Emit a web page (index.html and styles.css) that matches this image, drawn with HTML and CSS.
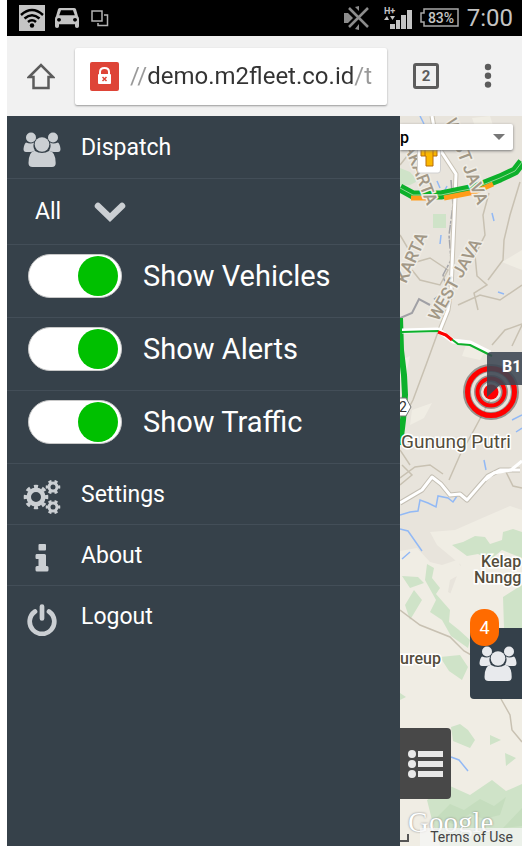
FILE: index.html
```html
<!DOCTYPE html>
<html lang="en">
<head>
<meta charset="utf-8">
<meta name="viewport" content="width=device-width, initial-scale=1">
<title>M2Fleet</title>
<link rel="stylesheet" href="styles.css">
</head>
<body>
<svg class="defs" aria-hidden="true">
  <symbol id="people" viewBox="0 0 38 36">
    <circle cx="8" cy="5.5" r="5"/><circle cx="30" cy="5.5" r="5"/>
    <path d="M3 10.500Q8 12.500 11 10.500Q9.500 15 12 18.500Q9 20 7 20H3Q0.500 20 0.500 17Q1 12 3 10.500Z"/>
    <path d="M35 10.500Q30 12.500 27 10.500Q28.500 15 26 18.500Q29 20 31 20H35Q37.500 20 37.500 17Q37 12 35 10.500Z"/>
    <circle cx="19" cy="12.500" r="7.300"/>
    <path d="M11.500 18.700Q19 23.500 26.500 18.700Q32.700 20 32.700 31Q32.700 35 29 35H9.500Q5.500 35 5.500 31Q5.500 20 11.500 18.700Z"/>
  </symbol>
</svg>

<div class="phone">
  <header class="status">
    <div class="status-group">
      <svg width="26" height="26" viewBox="0 0 26 26"><path fill="#c4c4c4" d="M0 0H26V26H0Z"/><g fill="none" stroke="#000" stroke-width="2.500"><path d="M2 10Q13 0 24 10"/><path d="M5.500 13.500Q13 7 20.500 13.500"/><path d="M9 17Q13 13.500 17 17"/></g><circle cx="13" cy="20.500" r="2.200"/></svg>
      <svg class="car" width="24" height="20" viewBox="0 0 24 22" preserveAspectRatio="none"><path fill="#c4c4c4" fill-rule="evenodd" d="M5 0H19Q20.500 0 21 1.500L23 9Q24 10 24 12V20Q24 22 22 22Q20 22 20 20V18H4V20Q4 22 2 22Q0 22 0 20V12Q0 10 1 9L3 1.500Q3.500 0 5 0ZM6 2.500L4.200 8H19.800L18 2.500ZM4 11A2 2 0 1 0 4 15A2 2 0 1 0 4 11ZM20 11A2 2 0 1 0 20 15A2 2 0 1 0 20 11Z"/></svg>
      <svg width="18" height="17" viewBox="0 0 18 17" fill="none" stroke="#b4b4b4" stroke-width="1.500"><path d="M1 1H11V11H1Z"/><path d="M13 5H16.500V15.500H7V13"/></svg>
    </div>
    <div class="status-group status-right">
      <svg width="26" height="24" viewBox="0 0 26 24"><path fill="#8c8c8c" d="M0 7H4L9 12L4 17H0Z"/><path d="M5 2L24 21M24 2L5 21" stroke="#8c8c8c" stroke-width="2.500"/><path d="M11 1L15 0V5ZM11 23L15 24V18Z" fill="#8c8c8c"/></svg>
      <svg class="signal" width="28" height="23" viewBox="0 0 28 23" fill="#c4c4c4"><text class="net" x="0" y="7">H+</text><path d="M0 13L3 9L5 13ZM6 9H11L8.500 13ZM6 17H11V22H6ZM12 13H16V22H12ZM17 8H22V22H17ZM23 3H28V22H23Z"/></svg>
      <svg width="39" height="20" viewBox="0 0 39 20"><path d="M4 1H38V18H4V14H1V5H4Z" fill="none" stroke="#a8a8a8" stroke-width="1.500"/><text class="charge" x="21" y="15">83%</text></svg>
      <span class="clock">7:00</span>
    </div>
  </header>

  <div class="toolbar">
    <button class="tool" aria-label="Home"><svg width="28" height="28" viewBox="0 0 28 28" fill="none" stroke="#5c5c5c" stroke-width="2.500"><path d="M2 15L14 3L26 15H21.500V26H6.500V15Z"/></svg></button>
    <label class="address">
      <svg width="29" height="29" viewBox="0 0 29 29"><rect width="29" height="29" rx="2" fill="#de4437"/><path d="M10 13V10Q10 6 14.500 6Q19 6 19 10V13" fill="none" stroke="#fff" stroke-width="2"/><rect x="8" y="12" width="13" height="10" rx="1" fill="#fff"/><path d="M12.500 15L16.500 19M16.500 15L12.500 19" stroke="#de4437" stroke-width="1.500"/></svg>
      <input class="url" type="text" value="//demo.m2fleet.co.id/t" aria-label="Address">
    </label>
    <button class="tool tabs" aria-label="Open tabs">2</button>
    <button class="tool" aria-label="Menu"><svg width="8" height="26" viewBox="0 0 8 26" fill="#5c5c5c"><circle cx="4" cy="4" r="3.200"/><circle cx="4" cy="12.800" r="3.200"/><circle cx="4" cy="21.600" r="3.200"/></svg></button>
  </div>

  <main class="content">
    <nav class="menu">
      <a class="row link" href="#dispatch"><span class="icon"><svg width="38" height="36" fill="#cbcfd3"><use href="#people"/></svg></span>Dispatch</a>
      <div class="row filter">
        <select class="group" aria-label="Group"><option>All</option></select>
        <svg class="chevron" width="32" height="20" viewBox="0 0 32 20"><path d="M4 4L16 15.500L28 4" fill="none" stroke="#cbcfd3" stroke-width="6.500" stroke-linecap="round"/></svg>
      </div>
      <label class="row switch"><input type="checkbox" checked>Show Vehicles</label>
      <label class="row switch"><input type="checkbox" checked>Show Alerts</label>
      <label class="row switch"><input type="checkbox" checked>Show Traffic</label>
      <a class="row link" href="#settings"><span class="icon"><svg width="38" height="34" viewBox="0 0 38 34" fill="none" stroke="#cbcfd3">
        <circle cx="13" cy="17" r="7.300" stroke-width="4.600"/><circle cx="13" cy="17" r="10.600" stroke-width="3.400" pathLength="16" stroke-dasharray="1 1" stroke-dashoffset=".5"/>
        <circle cx="30" cy="7" r="4" stroke-width="3"/><circle cx="30" cy="7" r="6" stroke-width="2.600" pathLength="12" stroke-dasharray="1 1" stroke-dashoffset=".5"/>
        <circle cx="30" cy="27" r="4" stroke-width="3"/><circle cx="30" cy="27" r="6" stroke-width="2.600" pathLength="12" stroke-dasharray="1 1" stroke-dashoffset=".5"/></svg></span>Settings</a>
      <a class="row link" href="#about"><span class="icon"><svg width="14" height="28" viewBox="0 0 14 28" fill="#cbcfd3"><rect x="3.500" width="7.500" height="6.500" rx="1"/><path d="M1.500 10H9.500Q11 10 11 11.500V22H12Q13.500 22 13.500 23.500V26Q13.500 27.500 12 27.500H2Q.5 27.500 .5 26V23.500Q.5 22 2 22H3.500V15H1.500Q.5 15 .5 13.500V11.500Q.5 10 1.500 10Z"/></svg></span>About</a>
      <a class="row link" href="#logout"><span class="icon"><svg width="30" height="32" viewBox="0 0 30 32" fill="none" stroke="#cbcfd3" stroke-width="4.700" stroke-linecap="round"><path d="M15 2.500V14.500M8 7.500A12.300 12.300 0 1 0 22 7.500"/></svg></span>Logout</a>
    </nav>

    <section class="map" aria-label="Map">
      <svg class="tiles" viewBox="400 116 122 730" preserveAspectRatio="xMinYMin slice">
        <path fill="#e8e4dc" d="M400 116H522V846H400Z"/>
        <path fill="#f0ede4" d="M400 551L417 548L430 562L442 565L457 560L464 572L450 580L448 592L462 600L470 612V640L522 640V846H400ZM430 532L455 530L480 519L510 506L522 510V640H465L448 600L461 565L437 545ZM502 262L522 250V270ZM472 118L490 116L496 135L480 140ZM402 360L410 356L406 375L400 380ZM412 410L432 403L424 418L410 425ZM466 345L486 350L480 360L462 356Z"/>
        <path fill="#cfe3c8" d="M433 214H446V228H433ZM400 168L410 172L418 181L410 185H400ZM452 545L463 542L475 536L485 537L490 544L502 540L503 532L513 529L522 532V558L502 550L490 560L478 554L467 556ZM427 564L434 568L432 578L440 588L436 594L443 602L450 610L449 622L459 630L470 640L468 648L451 636L442 620L430 612L436 600L425 580ZM402 576L418 577L424 583L410 588ZM405 605L414 590L422 600L410 620ZM503 597L522 585V628H504ZM440 657L460 655L468 667L462 680L449 671ZM400 693L406 697L400 700ZM451 727L460 724L468 730L475 740L470 748L453 741ZM490 735L501 740L490 745ZM505 753L516 758L506 766ZM427 800L450 786L470 795L492 780L506 791L522 784V846H440L432 820Z"/>
        <path fill="#c5ddbe" d="M436 818L450 804L464 810L480 799L494 806L506 797L500 815L484 819L470 814L453 824ZM503 828L522 808V826Z"/>
        <g class="minor">
          <path d="M489 193L483 215L485 235L475 255L477 276L487 285L474 293L478 310M520 182L510 215L504 240L503 260L488 280M400 165L412 150M400 235L416 262L430 258L448 270L440 285L420 280L412 270M438 332L426 365L413 400L400 424M458 305L480 295L500 300L522 285M492 345L505 330L522 324M522 325L512 346M490 400L474 430L460 455L449 480M400 478L415 467L430 465L443 474M505 470L513 486L522 488M400 610L420 625L450 637L464 651L480 660M501 699L510 715L512 730L522 742M410 465L400 450M400 485L412 475L402 465"/>
        </g>
        <path d="M451 180L453 205L449 235L451 260L443 275L447 290L433 300" fill="none" stroke="#a4a4a8" stroke-width="1.500" stroke-dasharray="9 2 3 1"/>
        <path d="M400 318L412 313L419 299L430 305" fill="none" stroke="#a0a0a5" stroke-width="2"/>
        <g class="water"><path d="M437 181L440 188M447 186L443 194M441 235L440 244M492 213L494 221M400 515L410 512L418 511L420 500L428 503L436 507L438 496L448 498L453 502L457 496M400 529L408 531L422 551M402 559L410 552M451 757L459 760L468 771M486 470L484 460M512 420L522 415M498 292L504 294M420 116L424 124M516 432L522 428"/></g>
        <g fill="none" stroke-linejoin="round">
          <path d="M432 116L437 145L456 174L454 220L451 290L448 310L440 330" stroke="#c9c3b6" stroke-width="5"/>
          <path d="M432 116L437 145L456 174L454 220L451 290L448 310L440 330" stroke="#fff" stroke-width="3"/>
          <path d="M400 503L422 490L432 477L441 484L450 495L460 494L467 500L480 485L488 476L500 470H520" stroke="#c4bfb4" stroke-width="5"/>
          <path d="M400 503L422 490L432 477L441 484L450 495L460 494L467 500L480 485L488 476L500 470H520" stroke="#fff" stroke-width="3"/>
          <path d="M485 480L494 473L511 470L522 461" stroke="#fff" stroke-width="3"/>
          <path d="M400 188L413 195L441 195L475 188L500 178L515 171L522 162" stroke="#0db02b" stroke-width="9"/>
          <path d="M411 198H428M444 198L475 192L493 184" stroke="#ff9c1a" stroke-width="5"/>
          <path d="M400 188L413 195L441 195L475 188L500 178L515 171L522 162" stroke="#8fd893" stroke-width="1"/>
          <path d="M400 318L401 350L404 375L405 395L403 420L400 445" stroke="#0db02b" stroke-width="6"/>
          <path d="M402 331L438 330L453 341L470 343L490 353" stroke="#fff" stroke-width="5"/>
          <path d="M402 332L438 331L450 338L458 344L470 345L492 356" stroke="#0db02b" stroke-width="2"/>
          <path d="M438 332L446 335L452 340" stroke="#f00" stroke-width="3"/>
        </g>
        <path d="M396 398H406L411 407L406 416H396Z" fill="#fff" stroke="#777"/>
        <text class="shield" x="399" y="412">2</text>
        <g class="province">
          <text transform="translate(404 146) rotate(69)">AKARTA</text>
          <text transform="translate(445 121) rotate(69)">WEST JAVA</text>
          <text transform="translate(406 284) rotate(-66)">KARTA</text>
          <text transform="translate(438 322) rotate(-61)">WEST JAVA</text>
        </g>
        <g class="town">
          <text class="big" x="401" y="448">Gunung Putri</text>
          <text x="481" y="567">Kelap</text>
          <text x="474" y="583">Nungg</text>
          <text x="400" y="664">ureup</text>
        </g>
        <g fill="none"><circle cx="491" cy="392" r="24" stroke="#333" stroke-opacity=".45" stroke-width="8"/><circle cx="491" cy="392" r="13.500" stroke="#333" stroke-opacity=".45" stroke-width="7"/><circle cx="491" cy="392" r="23.500" stroke="#f00" stroke-width="5"/><circle cx="491" cy="392" r="13.500" stroke="#f00" stroke-width="4"/></g>
        <circle cx="491" cy="392" r="7.500" fill="#f00"/>
        <path d="M522 352H491Q487 352 487 356V397L500 385H522Z" fill="#3b4652" fill-opacity=".88"/>
        <text class="unit" x="502" y="372">B1</text>
        <path fill="#fff" stroke="#d0d0d0" d="M417.500 140H440.500V170Q440.500 173 438 173H420Q417.500 173 417.500 170Z"/>
        <path d="M421 146H437V156H433V166H426V156H421Z" fill="#fbb800" stroke="#b66d0c"/><path d="M425 148V156M433 148V156" stroke="#b66d0c"/>
      </svg>
      <select class="layer" aria-label="Map layer"><option>p</option></select>
      <svg class="layer-arrow" width="12" height="6" viewBox="0 0 12 6"><path d="M0 0H12L6 6Z" fill="#777"/></svg>
      <button class="fleet" aria-label="Drivers"><svg width="38" height="36" fill="#e8eaed"><use href="#people"/></svg><span class="badge">4</span></button>
      <button class="list" aria-label="List"><svg width="36" height="28" viewBox="0 0 36 28" fill="#e8e8e8"><circle cx="4" cy="4" r="4"/><circle cx="4" cy="14" r="4"/><circle cx="4" cy="24" r="4"/><path d="M10 1H35V7H10ZM10 11H35V17H10ZM10 21H35V27H10Z"/></svg></button>
      <span class="google">Google</span>
      <span class="scale"></span>
      <a class="terms" href="#terms">Terms of Use</a>
    </section>
  </main>
</div>
</body>
</html>
```
FILE: styles.css
```css
* { box-sizing: border-box; }
body { margin: 0; background: #fff; font-family: Roboto, "Liberation Sans", sans-serif; }
button, input, select { font: inherit; margin: 0; padding: 0; border: 0; background: none; }
svg { display: block; flex: none; }
a { color: inherit; text-decoration: none; }
.defs { position: absolute; width: 0; height: 0; }
.phone { display: flex; flex-direction: column; min-height: 100vh; margin: 0 6px 0 7px; }

.status { display: flex; justify-content: space-between; align-items: center; height: 36px; padding: 0 9px 0 12px; background: #000; }
.status-group { display: flex; align-items: center; gap: 10px; }
.status-right { gap: 8px; }
.signal { margin-left: 6px; overflow: visible; }
.car { margin-right: 2px; }
.net { font-size: 9px; font-weight: 700; }
.charge { font-size: 14px; font-weight: 500; fill: #c4c4c4; text-anchor: middle; }
.clock { color: #c4c4c4; font-size: 24px; line-height: 36px; }

.toolbar { display: flex; align-items: center; height: 80px; padding: 0 14px; background: #f1f1f1; }
.tool { display: flex; flex: none; align-items: center; justify-content: center; width: 40px; height: 40px; }
.address { display: flex; flex: 1; align-items: center; gap: 11px; min-width: 0; height: 57px; margin: 0 26px 0 14px; padding: 0 8px 0 15px; border-radius: 2px; background: #fff; box-shadow: 0 1px 2px #999; }
.url { flex: 1; min-width: 0; font-size: 25px; color: transparent; background: linear-gradient(90deg, #999 17px, #333 17px, #333 233px, #999 233px); background-clip: text; -webkit-background-clip: text; }
.tabs { width: 26px; height: 26px; margin-right: 29px; border: 3px solid #5c5c5c; border-radius: 3px; color: #5c5c5c; font-size: 15px; font-weight: 700; }
.toolbar .url { font-size: 24px; background-image: linear-gradient(90deg, #999 17px, #333 17px, #333 224px, #999 224px); }

.content { display: grid; flex: 1; grid-template-columns: minmax(0, 1fr) 122px; }
.menu { background: #36414a; color: #fff; }
.row { display: flex; border-bottom: 1px solid #434e58; }
.link { align-items: center; gap: 20px; height: 61px; padding-left: 16px; font-size: 23px; }
.link:first-child { height: 63px; }
.link:last-child { border-bottom: 0; }
.icon { display: flex; justify-content: center; width: 38px; padding-top: 6px; }
.filter { align-items: center; height: 66px; padding-left: 28px; }
.group { width: 91px; height: 44px; appearance: none; color: #fff; font-size: 23px; }
.chevron { margin-left: -32px; pointer-events: none; }
.switch { align-items: flex-start; gap: 21px; height: 73px; padding: 9px 0 0 21px; font-size: 29px; line-height: 44px; }
.switch input { appearance: none; display: flex; align-items: center; width: 94px; height: 44px; padding: 0 3px; border: 1px solid #c8c8c8; border-radius: 22px; background: #fff; }
.switch input::before { content: ""; width: 40px; height: 40px; border-radius: 50%; background: #aaa; }
.switch input:checked { justify-content: flex-end; }
.switch input:checked::before { background: #00c000; }

.map { position: relative; overflow: hidden; background: #f0ede4; }
.tiles { position: absolute; width: 100%; height: 100%; }
.minor { fill: none; stroke: #c8c1b2; stroke-width: 1.5; }
.water { fill: none; stroke: #92b9f5; stroke-width: 1.5; }
.province { fill: #a29886; stroke: #f0ede6; stroke-width: 3px; paint-order: stroke; font-size: 17px; font-weight: 500; }
.town { fill: #544d3c; stroke: #fff; stroke-width: 3px; paint-order: stroke; font-size: 16px; font-weight: 500; }
.town .big { font-size: 19px; font-weight: 400; }
.shield { font-size: 14px; fill: #333; }
.unit { font-size: 16px; font-weight: 700; fill: #fff; }
.layer { position: absolute; top: 8px; left: 0; width: 113px; height: 26px; appearance: none; border-radius: 0 2px 2px 0; background: #fff; box-shadow: 0 1px 3px #777; color: #000; font-size: 16px; font-weight: 500; }
.layer-arrow { position: absolute; top: 18px; left: 93px; pointer-events: none; }
.fleet { position: absolute; right: 0; bottom: 147px; display: flex; align-items: center; justify-content: center; width: 52px; height: 71px; padding-left: 4px; border-radius: 4px 0 0 4px; background: #34404a; }
.badge { position: absolute; top: -19px; left: 0; width: 29px; height: 37px; border-radius: 14px; background: #ff6b00; color: #fff; font-size: 18px; line-height: 37px; }
.list { position: absolute; left: 0; bottom: 47px; display: flex; align-items: center; justify-content: center; width: 51px; height: 71px; border-radius: 0 4px 4px 0; background: #484848; }
.google { position: absolute; left: 8px; bottom: 6px; color: #fff; font: 29px/36px "Liberation Serif", serif; text-shadow: 0 0 2px #777; }
.scale { position: absolute; left: 0; bottom: 4px; width: 9px; height: 8px; border: solid #555; border-width: 0 2px 2px 0; }
.terms { position: absolute; right: 0; bottom: 0; width: 102px; padding-right: 9px; background: rgba(245, 245, 245, .75); color: #444; font-size: 14px; line-height: 18px; text-align: right; white-space: nowrap; }
```
